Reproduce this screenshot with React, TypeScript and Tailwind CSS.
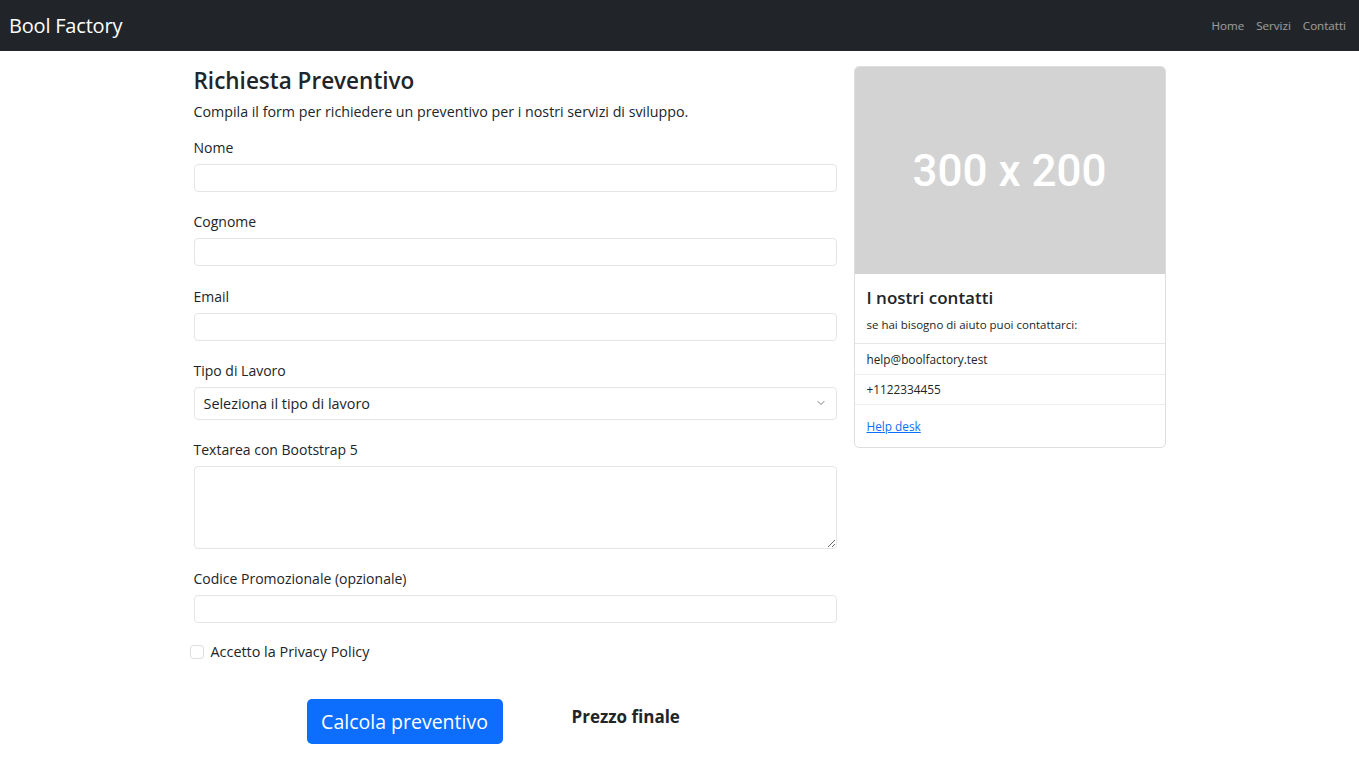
import { ChevronDown } from "lucide-react";

const fields = [
  { id: "nome", label: "Nome", gap: "mb-[18px]" },
  { id: "cognome", label: "Cognome", gap: "mb-[19px]" },
  { id: "email", label: "Email", gap: "mb-[18px]" },
];

const Field = ({ id, label, gap }: { id: string; label: string; gap: string }) => (
  <div className={gap}>
    <label htmlFor={id} className="block leading-[24px] mb-[4px]">
      {label}
    </label>
    <input
      id={id}
      type="text"
      className="block w-full h-[28px] rounded-[4px] border border-[#e3e5e8] bg-white px-2 outline-none"
    />
  </div>
);

export default function App() {
  return (
    <div
      className="min-h-screen bg-white text-[#212529] text-[14.4px]"
      style={{ fontFamily: "'Open Sans', 'Noto Sans', sans-serif" }}
    >
      <nav className="flex justify-between items-center h-[51px] pl-[9px] pr-[13px] bg-[#212529]">
        <a href="#" className="text-[20px] text-white tracking-[-0.2px]">
          Bool Factory
        </a>
        <ul className="flex gap-[12px] items-center text-[11.6px] text-white/55">
          <li>Home</li>
          <li>Servizi</li>
          <li>Contatti</li>
        </ul>
      </nav>

      <main className="w-[972px] mx-auto pt-[15px] flex gap-[17px] items-start">
        <section className="w-[643px]">
          <h1 className="text-[22.5px] leading-[30px] font-semibold">
            Richiesta Preventivo
          </h1>
          <p className="mt-[5px] leading-[22px] text-[14.25px]">
            Compila il form per richiedere un preventivo per i nostri servizi di sviluppo.
          </p>

          <form className="mt-[13px] text-[14px]">
            {fields.map((f) => (
              <Field key={f.id} id={f.id} label={f.label} gap={f.gap} />
            ))}

            <div className="mb-[18px]">
              <label className="block leading-[24px] mb-[4px]">Tipo di Lavoro</label>
              <div className="relative">
                <select className="block w-full h-[33px] appearance-none rounded-[4px] border border-[#e3e5e8] bg-white pl-[9px] text-[14.4px] outline-none">
                  <option>Seleziona il tipo di lavoro</option>
                </select>
                <ChevronDown
                  size={12}
                  strokeWidth={1.5}
                  className="absolute right-[10px] top-[10px] text-[#495057] pointer-events-none"
                />
              </div>
            </div>

            <div className="mb-[18px]">
              <label className="block leading-[24px] mb-[4px]">Textarea con Bootstrap 5</label>
              <textarea className="block w-full h-[83px] rounded-[4px] border border-[#e3e5e8] bg-white outline-none" />
            </div>

            <div className="mb-[18px]">
              <label className="block leading-[24px] mb-[4px]">
                Codice Promozionale (opzionale)
              </label>
              <input
                type="text"
                className="block w-full h-[28px] rounded-[4px] border border-[#e3e5e8] bg-white px-2 outline-none"
              />
            </div>

            <div className="flex items-center gap-[7px] -ml-[4px] h-[22px]">
              <span className="w-[14px] h-[14px] rounded-[3px] border border-[#dcdfe2] bg-white" />
              <span className="text-[14.4px]">Accetto la Privacy Policy</span>
            </div>

            <div className="flex items-start mt-[36px] ml-[113px] gap-[69px]">
              <button
                type="button"
                className="h-[45px] w-[196px] rounded-[5px] bg-[#0d6efd] text-white text-[19.5px]"
              >
                Calcola preventivo
              </button>
              <h5 className="mt-[5px] text-[17px] font-bold">Prezzo finale</h5>
            </div>
          </form>
        </section>

        <aside className="w-[312px] rounded-[5px] border border-[#dcdfe2] overflow-hidden">
          <div className="h-[207px] bg-[#d3d3d3] flex items-center justify-center">
            <span
              className="text-white text-[44px] font-medium"
              style={{ fontFamily: "Roboto, 'Liberation Sans', sans-serif" }}
            >
              300 x 200
            </span>
          </div>
          <div className="px-[12px] pt-[13px] pb-[9px] border-b border-[#e6e7e9]">
            <h5 className="text-[17px] leading-[22px] font-semibold">I nostri contatti</h5>
            <p className="mt-[7px] text-[11.5px] leading-[18px]">
              se hai bisogno di aiuto puoi contattarci:
            </p>
          </div>
          <ul className="text-[11.8px]">
            <li className="h-[31px] pt-[1px] flex items-center px-[12px] border-b border-[#eceef0]">
              help@boolfactory.test
            </li>
            <li className="h-[30px] pt-[1px] flex items-center px-[12px] border-b border-[#eceef0]">
              +1122334455
            </li>
          </ul>
          <div className="px-[12px] h-[42px] pt-[1px] flex items-center text-[11.8px]">
            <a href="#" className="text-[#0d6efd] underline">
              Help desk
            </a>
          </div>
        </aside>
      </main>
    </div>
  );
}
